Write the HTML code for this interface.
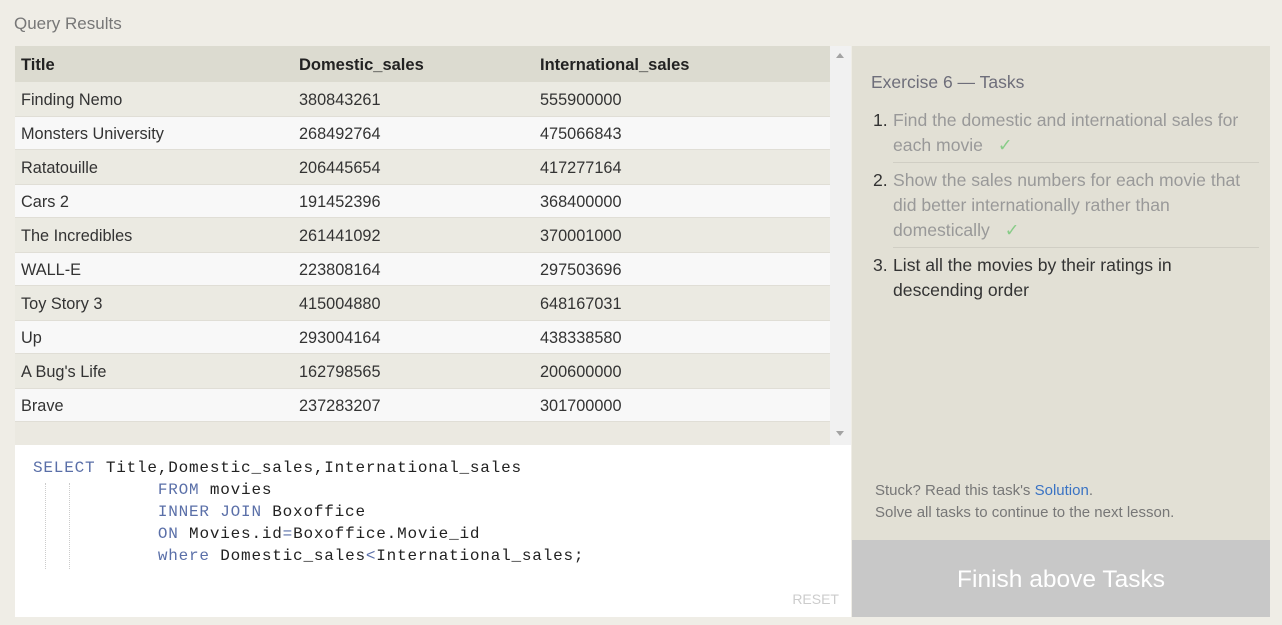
<!DOCTYPE html>
<html><head><style>
body{margin:0;width:1282px;height:625px;background:#efede6;font-family:"Liberation Sans",sans-serif;position:relative;overflow:hidden}
.hdr{position:absolute;left:14px;top:14px;font-size:17px;color:#777}
.tbl{position:absolute;left:15px;top:46px;width:815px;height:399px;background:#ebe9e1}
.row{position:absolute;left:0;width:815px;height:34px;font-size:16.3px;color:#333;box-sizing:border-box}
.row span{position:absolute;top:9px}
.c1{left:6px}.c2{left:284px}.c3{left:525px}
.head{background:#dcdbd0;font-weight:bold;height:36px;color:#222;font-size:16.5px}
.head span{top:10px}
.w{background:#f8f8f8;box-shadow:inset 0 1px 0 #e0ded6,inset 0 -1px 0 #e0ded6}
.g{background:#ebeae2}
.sb{position:absolute;left:830px;top:46px;width:21px;height:399px;background:#f1f1f1}
.ed{position:absolute;left:15px;top:445px;width:836px;height:172px;background:#fff}
pre{margin:0;position:absolute;left:18px;top:12px;font-family:"Liberation Mono",monospace;font-size:16px;letter-spacing:0.8px;line-height:22px;color:#222}
.k{color:#5a6fa8}
.guide{position:absolute;top:38px;width:0;height:86px;border-left:1px dotted #ccc}
.reset{position:absolute;right:12px;bottom:10px;color:#ccc;font-size:14px}
.rp{position:absolute;left:852px;top:46px;width:418px;height:494px;background:#e2e0d5}
.fin{position:absolute;left:852px;top:540px;width:418px;height:77px;background:#c8c8c8;color:#fff;font-size:24.5px;text-align:center;line-height:80px}
.ex{position:absolute;left:19px;top:26px;font-size:17.5px;color:#6e6e7a}
.t{position:absolute;left:21px;width:386px;font-size:17.6px;line-height:25px;color:#999}
.t b{font-weight:normal;color:#333;position:absolute;left:0}
.t div{padding-left:20px;width:356px}
.ck{color:#8c8;margin-left:10px}
.line{position:absolute;left:41px;width:366px;border-top:1px solid #d0cec4}
.st{position:absolute;left:23px;top:434px;font-size:15px;color:#777;line-height:22px}
</style></head><body>
<div class="hdr">Query Results</div>
<div class="tbl">
<div class="row head" style="top:0"><span class="c1">Title</span><span class="c2">Domestic_sales</span><span class="c3">International_sales</span></div>
<div class="row g" style="top:36px"><span class="c1">Finding Nemo</span><span class="c2">380843261</span><span class="c3">555900000</span></div>
<div class="row w" style="top:70px"><span class="c1">Monsters University</span><span class="c2">268492764</span><span class="c3">475066843</span></div>
<div class="row g" style="top:104px"><span class="c1">Ratatouille</span><span class="c2">206445654</span><span class="c3">417277164</span></div>
<div class="row w" style="top:138px"><span class="c1">Cars 2</span><span class="c2">191452396</span><span class="c3">368400000</span></div>
<div class="row g" style="top:172px"><span class="c1">The Incredibles</span><span class="c2">261441092</span><span class="c3">370001000</span></div>
<div class="row w" style="top:206px"><span class="c1">WALL-E</span><span class="c2">223808164</span><span class="c3">297503696</span></div>
<div class="row g" style="top:240px"><span class="c1">Toy Story 3</span><span class="c2">415004880</span><span class="c3">648167031</span></div>
<div class="row w" style="top:274px"><span class="c1">Up</span><span class="c2">293004164</span><span class="c3">438338580</span></div>
<div class="row g" style="top:308px"><span class="c1">A Bug's Life</span><span class="c2">162798565</span><span class="c3">200600000</span></div>
<div class="row w" style="top:342px"><span class="c1">Brave</span><span class="c2">237283207</span><span class="c3">301700000</span></div>
</div>
<div class="sb"><div style="position:absolute;left:6px;top:7px;border:4px solid transparent;border-bottom:5px solid #a3a3a3;border-top:0"></div><div style="position:absolute;left:6px;bottom:9px;border:4px solid transparent;border-top:5px solid #a3a3a3;border-bottom:0"></div></div>
<div class="ed">
<div class="guide" style="left:30px"></div><div class="guide" style="left:54px"></div>
<pre><span class="k">SELECT</span> Title,Domestic_sales,International_sales
            <span class="k">FROM</span> movies
            <span class="k">INNER JOIN</span> Boxoffice
            <span class="k">ON</span> Movies.id<span class="k">=</span>Boxoffice.Movie_id
            <span class="k">where</span> Domestic_sales<span class="k">&lt;</span>International_sales;</pre>
<div class="reset">RESET</div>
</div>
<div class="rp">
<div class="ex">Exercise 6 — Tasks</div>
<div class="t" style="top:62px"><b>1.</b><div>Find the domestic and international sales for each movie <span class="ck">✓</span></div></div>
<div class="line" style="top:116px"></div>
<div class="t" style="top:122px"><b>2.</b><div>Show the sales numbers for each movie that did better internationally rather than domestically <span class="ck">✓</span></div></div>
<div class="line" style="top:201px"></div>
<div class="t" style="top:207px;color:#333"><b>3.</b><div>List all the movies by their ratings in descending order</div></div>
<div class="st">Stuck? Read this task's <span style="color:#3a73c4">Solution</span>.<br>Solve all tasks to continue to the next lesson.</div>
</div>
<div class="fin">Finish above Tasks</div>
</body></html>
